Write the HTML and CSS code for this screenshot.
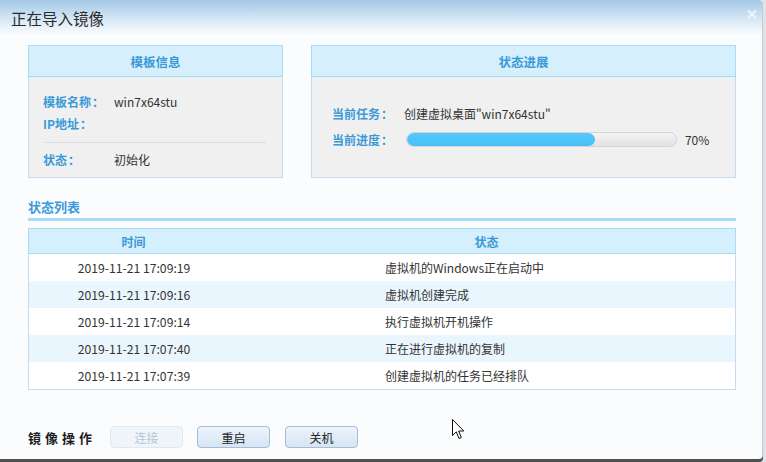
FILE: index.html
```html
<!DOCTYPE html>
<html lang="zh-CN">
<head>
<meta charset="utf-8">
<title>正在导入镜像</title>
<link rel="stylesheet" href="styles.css">
</head>
<body>
<div class="window">
  <div class="titlebar">
    <span class="title">正在导入镜像</span>
    <svg class="close" width="10" height="9" viewBox="0 0 10 9"><path d="M1 0.5 L9 8.5 M9 0.5 L1 8.5" stroke="#eef3f8" stroke-width="2.2" fill="none"/></svg>
  </div>
  <div class="content">
    <div class="panels">
      <div class="panel panel-left">
        <div class="panel-head">模板信息</div>
        <div class="panel-body info">
          <div class="row"><span class="label">模板名称<span class="colon">：</span></span><span class="value">win7x64stu</span></div>
          <div class="row"><span class="label">IP地址<span class="colon">：</span></span><span class="value"></span></div>
          <div class="divider"></div>
          <div class="row"><span class="label">状态<span class="colon">：</span></span><span class="value">初始化</span></div>
        </div>
      </div>
      <div class="panel panel-right">
        <div class="panel-head">状态进展</div>
        <div class="panel-body progress-body">
          <div class="row"><span class="label label-wide">当前任务<span class="colon">：</span></span><span class="value">创建虚拟桌面"win7x64stu"</span></div>
          <div class="row"><span class="label label-wide">当前进度<span class="colon">：</span></span>
            <div class="bar"><div class="fill" style="width:70%"></div></div>
            <span class="pct">70%</span>
          </div>
        </div>
      </div>
    </div>

    <div class="section-title">状态列表</div>
    <div class="section-rule"></div>

    <div class="table">
      <div class="thead">
        <div class="c-time">时间</div>
        <div class="c-state">状态</div>
      </div>
      <div class="tr"><div class="c-time">2019-11-21 17:09:19</div><div class="c-state">虚拟机的Windows正在启动中</div></div>
      <div class="tr alt"><div class="c-time">2019-11-21 17:09:16</div><div class="c-state">虚拟机创建完成</div></div>
      <div class="tr"><div class="c-time">2019-11-21 17:09:14</div><div class="c-state">执行虚拟机开机操作</div></div>
      <div class="tr alt"><div class="c-time">2019-11-21 17:07:40</div><div class="c-state">正在进行虚拟机的复制</div></div>
      <div class="tr"><div class="c-time">2019-11-21 17:07:39</div><div class="c-state">创建虚拟机的任务已经排队</div></div>
    </div>

    <div class="actions">
      <span class="actions-label">镜像操作</span>
      <button class="btn" disabled>连接</button>
      <button class="btn">重启</button>
      <button class="btn">关机</button>
    </div>
  </div>
  <svg class="cursor" width="13" height="21" viewBox="0 0 13 21"><path d="M0.5 0.5 L0.5 16.5 L4.3 12.8 L7 19.5 L9.3 18.5 L6.7 12 L11.8 12 Z" fill="#fff" stroke="#111" stroke-width="1" stroke-linejoin="miter"/></svg>
</div>
</body>
</html>
```
FILE: styles.css
```css
html, body {
  margin: 0;
  padding: 0;
}
body {
  width: 766px;
  height: 462px;
  overflow: hidden;
  background: #dfe3e7;
  font-family: "Noto Sans CJK SC", "Noto Sans", sans-serif;
  font-size: 12px;
  color: #333;
}
.window {
  position: relative;
  width: 763px;
  height: 459px;
  background: #fbfcfd;
  border-right: 1px solid #c3cad2;
  border-radius: 0 4px 4px 0;
  box-shadow: 0 3px 0 #505050;
  display: flex;
  flex-direction: column;
  box-sizing: border-box;
}
.titlebar {
  height: 36px;
  flex: none;
  display: flex;
  align-items: center;
  justify-content: space-between;
  padding: 0 5px 0 11px;
  background: linear-gradient(#a2c7e5 0%, #c9e0f2 40%, #eef5fb 80%, #fbfcfd 100%);
  border-radius: 0 4px 0 0;
}
.title {
  font-size: 15.5px;
  color: #2b2b2b;
  line-height: 36px;
  margin-top: 0;
}
.close {
  margin-top: -8px;
}
.content {
  padding: 9px 26px 0 28px;
  display: flex;
  flex-direction: column;
}
.panels {
  display: flex;
  gap: 28px;
  height: 133px;
}
.panel {
  border: 1px solid #c6dcee;
  background: #f0f0f0;
  display: flex;
  flex-direction: column;
  box-sizing: border-box;
}
.panel-left { width: 256px; }
.panel-right { width: 427px; }
.panel-head {
  flex: none;
  background: #d6effc;
  border: 1px solid #a5dbf4;
  margin: -1px -1px 0 -1px;
  box-sizing: border-box;
  height: 32px;
  display: flex;
  align-items: center;
  justify-content: center;
  font-size: 12.5px;
  font-weight: bold;
  color: #3a9ad8;
}
.panel-body {
  flex: 1;
}
.info {
  padding: 13px 16px 0 14px;
}
.row {
  display: flex;
  align-items: center;
  height: 22px;
}
.label {
  width: 71px;
  flex: none;
  font-weight: bold;
  color: #3a9ad8;
  font-size: 12px;
}
.colon {
  font-family: "Noto Sans CJK TC", "Noto Sans CJK SC", sans-serif;
  margin-left: 1px;
}
.label-wide { width: 72px; }
.value {
  color: #333;
  font-size: 12px;
}
.divider {
  height: 1px;
  background: #dcdcdc;
  margin: 8px 0 5px 2px;
}
.progress-body {
  padding: 23px 20px 0 20px;
}
.progress-body .row {
  height: 26px;
}
.bar {
  width: 269px;
  height: 13px;
  margin-left: 2px;
  border: 1px solid #d4d4d4;
  border-radius: 8px;
  background: linear-gradient(#f4f4f4, #e2e2e2);
  overflow: hidden;
}
.fill {
  height: 100%;
  border-radius: 8px;
  background: linear-gradient(#56c7fb, #47c0f9);
}
.pct {
  margin-left: 8px;
  color: #333;
}
.section-title {
  margin-top: 19px;
  height: 20px;
  line-height: 20px;
  font-size: 13px;
  font-weight: bold;
  color: #3d9bdb;
}
.section-rule {
  height: 3px;
  background: #a9ddf7;
  margin-top: 1px;
}
.table {
  margin-top: 7px;
  border: 1px solid #c6dcee;
  border-top: none;
  background: #fff;
}
.thead {
  display: flex;
  height: 26px;
  box-sizing: border-box;
  background: #d6effc;
  border: 1px solid #a5dbf4;
  margin: 0 -1px;
  align-items: center;
  font-weight: bold;
  font-size: 12px;
  color: #3a9ad8;
}
.thead .c-state { text-align: center; padding-left: 0; }
.tr {
  display: flex;
  height: 27px;
  align-items: center;
}
.tr.alt { background: #eaf6fd; }
.c-time {
  width: 210px;
  flex: none;
  text-align: center;
  font-size: 12.2px;
}
.c-state {
  flex: 1;
  padding-left: 146px;
}
.thead .c-time { width: 209px; font-size: 12px; }
.tr .c-time, .tr .c-state { color: #333; }
.actions {
  margin-top: 36px;
  display: flex;
  align-items: center;
}
.actions-label {
  font-size: 13px;
  font-weight: bold;
  color: #1e1e1e;
  letter-spacing: 4px;
  width: 82px;
}
.btn {
  width: 73px;
  height: 22px;
  margin-right: 14px;
  padding: 0;
  font-family: inherit;
  font-size: 12px;
  color: #222;
  border: 1px solid #a6bdd5;
  border-radius: 4px;
  background: linear-gradient(#edf4fb, #d5e4f4);
}
.btn + .btn + .btn { margin-left: 1px; }
.btn:disabled {
  color: #b6c5d4;
  border-color: #dfe9f3;
  background: #eff5fb;
}
.cursor {
  position: absolute;
  left: 452px;
  top: 419px;
}
```
